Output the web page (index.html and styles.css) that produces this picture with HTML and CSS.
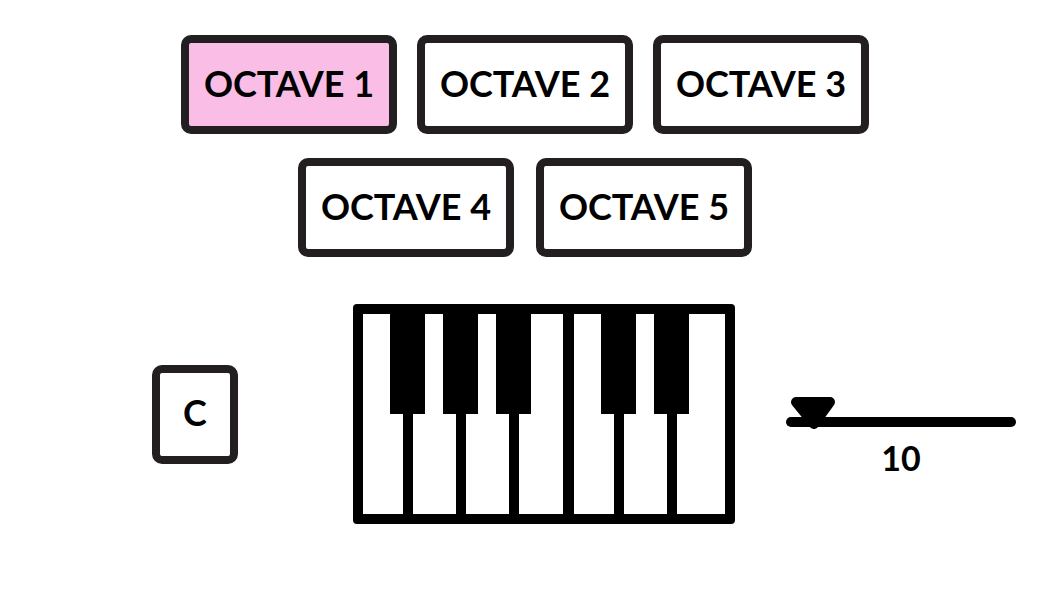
FILE: index.html
```html
<!DOCTYPE html>
<html lang="en">
<head>
<meta charset="utf-8">
<meta name="viewport" content="width=device-width, initial-scale=1">
<title>Piano</title>
<link rel="stylesheet" href="styles.css">
</head>
<body>
<main class="app">
  <nav class="octaves" aria-label="Octave">
    <div class="octave-row">
      <button type="button" class="box octave octave-active" aria-pressed="true">OCTAVE 1</button>
      <button type="button" class="box octave">OCTAVE 2</button>
      <button type="button" class="box octave">OCTAVE 3</button>
    </div>
    <div class="octave-row octave-row-short">
      <button type="button" class="box octave">OCTAVE 4</button>
      <button type="button" class="box octave">OCTAVE 5</button>
    </div>
  </nav>
  <section class="player">
    <output class="box note">C</output>
    <div class="piano">
      <div class="key key-first"><button type="button" class="white" aria-label="Key 1"></button><button type="button" class="black" aria-label="Key 1 sharp"></button></div>
      <div class="key"><button type="button" class="white" aria-label="Key 2"></button><button type="button" class="black" aria-label="Key 2 sharp"></button></div>
      <div class="key"><button type="button" class="white" aria-label="Key 3"></button><button type="button" class="black" aria-label="Key 3 sharp"></button></div>
      <div class="key key-break"><button type="button" class="white" aria-label="Key 4"></button></div>
      <div class="key key-first"><button type="button" class="white" aria-label="Key 5"></button><button type="button" class="black" aria-label="Key 5 sharp"></button></div>
      <div class="key"><button type="button" class="white" aria-label="Key 6"></button><button type="button" class="black" aria-label="Key 6 sharp"></button></div>
      <div class="key key-last"><button type="button" class="white" aria-label="Key 7"></button></div>
    </div>
    <div class="volume">
      <input class="slider" id="level" type="range" min="10" max="100" value="10" aria-label="Level">
      <output class="level" for="level">10</output>
    </div>
  </section>
</main>
</body>
</html>
```
FILE: styles.css
```css
* {
  box-sizing: border-box;
}

body {
  margin: 0;
  background: #fff;
  color: #000;
  font-family: Lato, "Open Sans", sans-serif;
  font-size: 36px;
  font-weight: 700;
}

button {
  margin: 0;
  padding: 0;
  border: 0;
  color: inherit;
  font: inherit;
  cursor: pointer;
}

.app {
  padding: 35px 0;
}

.octaves {
  display: flex;
  flex-direction: column;
  gap: 24px;
}

.octave-row {
  display: flex;
  justify-content: center;
  gap: 20px;
}

.octave-row-short {
  gap: 22px;
}

.box {
  display: flex;
  align-items: center;
  justify-content: center;
  height: 99px;
  padding-bottom: 4px;
  border: 8px solid #231f20;
  border-radius: 10px;
  background: #fff;
}

.octave {
  width: 216px;
  white-space: nowrap;
}

.octave-active {
  background: #fabde5;
}

.player {
  display: flex;
  align-items: center;
  margin-top: 47px;
  padding: 0 34px 0 152px;
}

.note {
  flex: none;
  width: 86px;
}

.piano {
  display: flex;
  flex: none;
  gap: 10px;
  height: 220px;
  margin: 0 51px 0 115px;
  padding: 10px;
  border-radius: 4px;
  background: #000;
}

.key {
  position: relative;
  width: 43px;
}

.key-first {
  width: 40px;
}

.key-break {
  width: 44px;
  margin-right: 1px;
}

.key-last {
  width: 48px;
}

.white {
  display: block;
  width: 100%;
  height: 100%;
  background: #fff;
}

.black {
  position: absolute;
  z-index: 1;
  top: 0;
  right: -22px;
  width: 35px;
  height: 100px;
  background: #000;
}

.volume {
  display: flex;
  flex: 1;
  flex-direction: column;
  align-self: flex-start;
  min-width: 120px;
  margin-top: 93px;
}

.slider {
  width: 100%;
  height: 33px;
  margin: 0;
  padding: 20px 0 3px;
  appearance: none;
  background: none;
}

.slider::-webkit-slider-runnable-track {
  height: 10px;
  border-radius: 5px;
  background: #000;
}

/* The thumb carries 5px of clear space on each side of the pointer. */
.slider::-webkit-slider-thumb {
  width: 54px;
  height: 33px;
  margin-top: -20px;
  appearance: none;
  background: url("data:image/svg+xml,%3Csvg xmlns='http://www.w3.org/2000/svg' width='54' height='33' viewBox='0 0 54 33'%3E%3Cpath d='M10 5H44L28 27Z' fill='%23000' stroke='%23000' stroke-width='10' stroke-linejoin='round'/%3E%3C/svg%3E") no-repeat;
}

.level {
  margin-top: 6px;
  font-size: 34px;
  line-height: 44px;
  text-align: center;
}
```
